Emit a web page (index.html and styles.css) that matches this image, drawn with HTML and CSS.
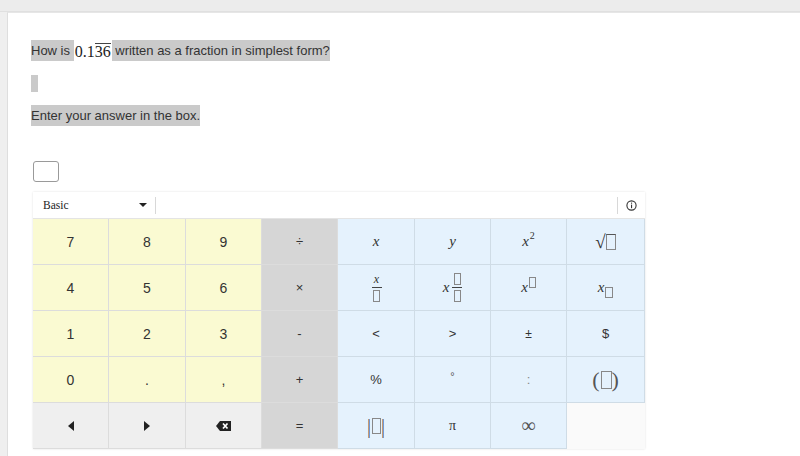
FILE: index.html
```html
<!DOCTYPE html>
<html>
<head>
<meta charset="utf-8">
<link rel="stylesheet" href="styles.css">
</head>
<body>
<div class="topbar"></div>
<div class="panel">
  <p class="line q"><span class="hl">How is </span><span class="math">0.1<span class="rep">36</span></span><span class="hl"> written as a fraction in simplest form?</span></p>
  <div class="mark"></div>
  <p class="line e"><span class="hl">Enter your answer in the box.</span></p>
  <div class="answer"></div>
  <div class="keypad">
    <div class="kp-head">
      <div class="select">Basic<span class="caret"></span></div>
      <div class="sep"></div>
      <div class="grow"></div>
      <div class="sep"></div>
      <div class="info"><svg width="11" height="11" viewBox="0 0 11 11"><circle cx="5.5" cy="5.5" r="4.6" fill="none" stroke="#333" stroke-width="1.1"/><rect x="5" y="2.6" width="1.1" height="1.1" fill="#333"/><rect x="5" y="4.6" width="1.1" height="3.6" fill="#333"/></svg></div>
    </div>
    <div class="grid">
      <div class="k n">7</div><div class="k n">8</div><div class="k n">9</div><div class="k o">÷</div>
      <div class="k m"><i>x</i></div><div class="k m"><i>y</i></div><div class="k m"><span class="wrap"><i>x</i><sup>2</sup></span></div><div class="k m"><span class="sqrt">√</span><span class="bx"></span></div>

      <div class="k n">4</div><div class="k n">5</div><div class="k n">6</div><div class="k o">×</div>
      <div class="k m"><span class="frac"><i>x</i><span class="bar"></span><span class="bx"></span></span></div>
      <div class="k m"><i>x</i><span class="frac mixed"><span class="bx"></span><span class="bar"></span><span class="bx"></span></span></div>
      <div class="k m"><i>x</i><span class="bx sup"></span></div>
      <div class="k m"><i>x</i><span class="bx sub"></span></div>

      <div class="k n">1</div><div class="k n">2</div><div class="k n">3</div><div class="k o">-</div>
      <div class="k m s">&lt;</div><div class="k m s">&gt;</div><div class="k m s sm">±</div><div class="k m s">$</div>

      <div class="k n">0</div><div class="k n">.</div><div class="k n">,</div><div class="k o">+</div>
      <div class="k m s">%</div><div class="k m s deg">°</div><div class="k m s col">:</div><div class="k m"><span class="par">(</span><span class="bx"></span><span class="par">)</span></div>

      <div class="k g"><svg width="8" height="10" viewBox="0 0 8 10"><path d="M7 0 L1 5 L7 10 Z" fill="#222"/></svg></div>
      <div class="k g"><svg width="8" height="10" viewBox="0 0 8 10"><path d="M1 0 L7 5 L1 10 Z" fill="#222"/></svg></div>
      <div class="k g"><svg width="15" height="10" viewBox="0 0 15 10"><path d="M4 0 H15 V10 H4 L0 5 Z" fill="#222"/><path d="M7 2.5 L11.5 7.5 M11.5 2.5 L7 7.5" stroke="#fff" stroke-width="1.7"/></svg></div>
      <div class="k o">=</div>
      <div class="k m"><span class="abs">|</span><span class="bx"></span><span class="abs">|</span></div>
      <div class="k m pi">π</div>
      <div class="k m inf">∞</div>
      <div class="k empty"></div>
    </div>
  </div>
</div>
</body>
</html>
```
FILE: styles.css
```css
html, body {
  margin: 0;
  padding: 0;
}
body {
  background: #efefef;
  font-family: "Liberation Sans", Arial, sans-serif;
  color: #333;
  width: 800px;
  height: 456px;
  overflow: hidden;
}
.topbar {
  height: 11px;
  background: #ececec;
  border-bottom: 1px solid #e0e0e0;
}
.panel {
  margin-left: 7px;
  background: #fff;
  border-left: 1px solid #dedede;
  border-top: 1px solid #e6e6e6;
  height: 444px;
  padding-left: 23px;
  padding-top: 27px;
  box-sizing: border-box;
}
.line {
  margin: 0;
  font-size: 13px;
  height: 21px;
  display: flex;
  align-items: center;
}
.hl {
  background: #cacaca;
  display: inline-block;
  height: 21px;
  line-height: 21px;
  white-space: pre;
}
.math {
  font-family: "Liberation Serif", "Times New Roman", serif;
  font-size: 16px;
  height: 21px;
  line-height: 23px;
  display: inline-block;
  padding: 0 1px;
  color: #222;
}
.rep {
  border-top: 1px solid #444;
  line-height: 15px;
  display: inline-block;
}
.mark {
  width: 7px;
  height: 17px;
  background: #cacaca;
  margin-top: 14px;
}
.line.e {
  margin-top: 13px;
}
.answer {
  width: 24px;
  height: 19px;
  border: 1px solid #9a9a9a;
  border-radius: 3px;
  margin-left: 2px;
  margin-top: 35px;
}
.keypad {
  margin-left: 2px;
  margin-top: 10px;
  width: 612px;
  box-shadow: 0 0 2px rgba(0,0,0,0.12);
}
.kp-head {
  height: 27px;
  display: flex;
  align-items: center;
  background: #fff;
  border-bottom: 1px solid #e4e4e4;
  box-sizing: border-box;
}
.select {
  font-family: "Liberation Serif", "Times New Roman", serif;
  font-size: 11.5px;
  color: #222;
  width: 104px;
  padding-left: 10px;
  padding-right: 8px;
  display: flex;
  align-items: center;
  justify-content: space-between;
}
.caret {
  width: 0;
  height: 0;
  border-left: 4px solid transparent;
  border-right: 4px solid transparent;
  border-top: 4px solid #222;
}
.sep {
  width: 1px;
  height: 17px;
  background: #d8d8d8;
}
.grow { flex: 1; }
.info {
  width: 27px;
  display: flex;
  justify-content: center;
  align-items: center;
}
.grid {
  display: grid;
  grid-template-columns: 76px 77px 76px 76px 77px 76px 76px 78px;
  grid-auto-rows: 46px;
}
.k {
  display: flex;
  align-items: center;
  justify-content: center;
  border-right: 1px solid #dcdcdc;
  border-bottom: 1px solid #dcdcdc;
  box-sizing: border-box;
  font-size: 14px;
  color: #333;
}
.n { background: #fafad2; }
.o { background: #d6d6d6; font-size: 13px; }
.m {
  background: #e5f2fd;
  border-color: #cfdce6;
  font-family: "Liberation Serif", "Times New Roman", serif;
  font-size: 15px;
  color: #333;
}
.m.s {
  font-family: "Liberation Sans", Arial, sans-serif;
  font-size: 13px;
}
.m.sm { font-size: 12px; }
.m.deg { font-size: 11px; padding-bottom: 8px; color: #555; }
.m.col { color: #888; }
.g { background: #efefef; }
.empty { background: #fafafa; border: none; }
.bx {
  display: inline-block;
  width: 8px;
  height: 14px;
  border: 1px solid #888;
  box-sizing: border-box;
}
.wrap { display: inline-block; }
.wrap sup { font-size: 10px; vertical-align: 7px; margin-left: 1px; line-height: 0; }
.sqrt { font-size: 19px; line-height: 1; }
.m .bx { margin-left: 1px; }
.sqrt + .bx { width: 10px; height: 16px; border-top-color: #555; margin-left: 0; }
.frac {
  display: inline-flex;
  flex-direction: column;
  align-items: center;
  margin-left: 1px;
}
.frac.mixed { margin-left: 3px; }
.frac i { font-size: 12px; line-height: 12px; }
.frac .bar { width: 10px; height: 1px; background: #444; margin: 2px 0; }
.frac .bx { width: 7px; height: 12px; margin: 0; }
.bx.sup { width: 7px; height: 11px; position: relative; top: -5px; }
.bx.sub { width: 8px; height: 11px; position: relative; top: 5px; }
.par { font-size: 22px; font-weight: 300; color: #555; line-height: 1; }
.par + .bx { width: 11px; height: 18px; }
.abs { font-size: 20px; color: #555; line-height: 1; }
.abs + .bx { width: 9px; height: 16px; }
.pi { font-size: 14px; }
.inf { font-size: 20px; color: #555; }
.m i { font-style: italic; }
```
